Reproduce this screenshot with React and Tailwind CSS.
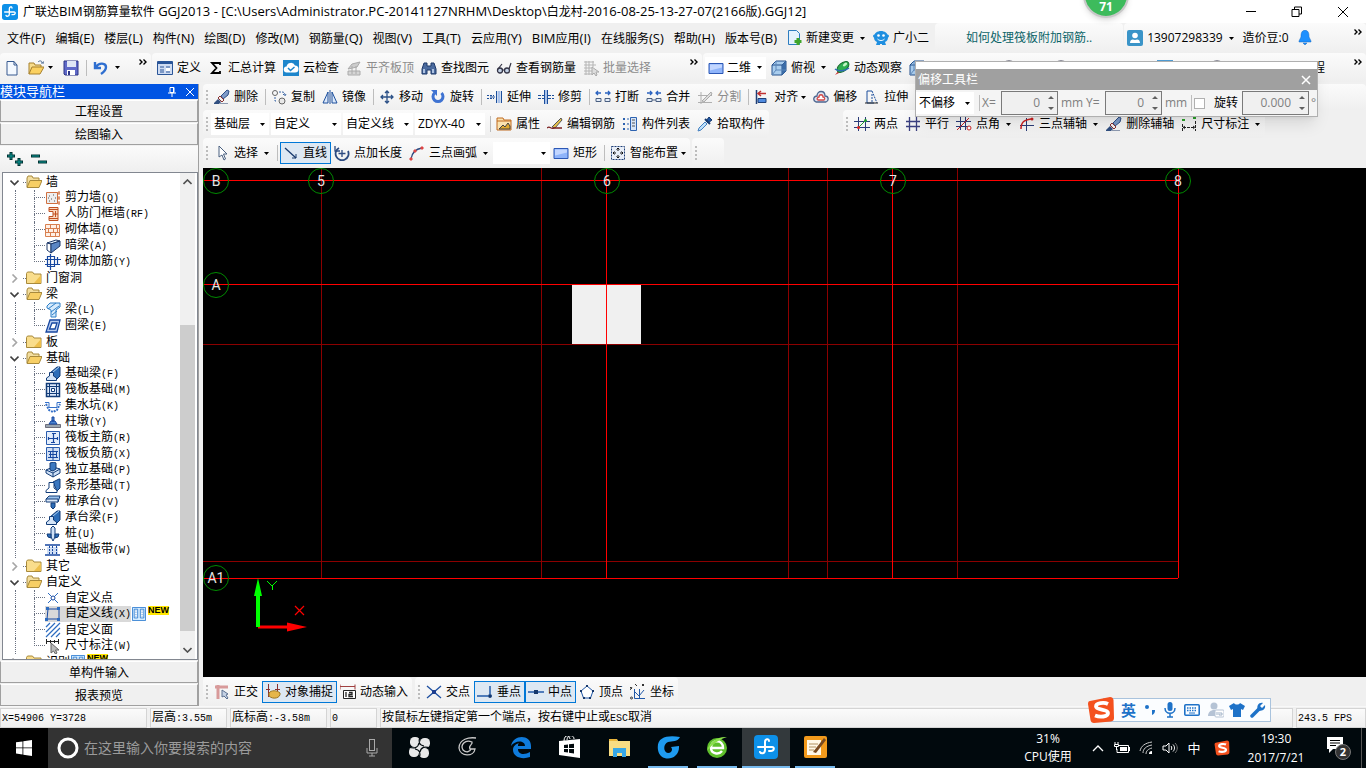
import React, { useState } from 'react';

const BLUE = '#1c4f9c';

// 16x16 drawings, keyed by name
const icons = {
  page: <><path d="M3 1.500h7l3 3.500V15H3z" fill="#f4f9ff" stroke="#36598f" /><path d="M10 1.500V5h3" fill="none" stroke="#36598f" /></>,
  open: <><path d="M1 14V3h5l1 2h6v3" fill="#f7dc8c" stroke="#a7812e" /><path d="M1 14l3-7h12l-4 7z" fill="#fbd161" stroke="#a7812e" /><path d="M10 2c2-2 4-1 4.500 1m-1.500 0h3v-2" fill="none" stroke="#4d6b91" /></>,
  save: <><path d="M1 1h14v14H2l-1-1z" fill="#5f69c8" stroke="#2d3585" /><path d="M4 1h9v6H4z" fill="#dfe6f5" /><path d="M4 10h8v5H4z" fill="#fff" /><path d="M5 11h2v4H5z" fill="#2d3585" /></>,
  undo: <path d="M2 2v6h6M3 7c3-5 10-4 10 0 0 3-2 5-5 7" fill="none" stroke="#2f6fd0" strokeWidth="2.400" />,
  define: <><path d="M.5 1.500h15v13H.5z" fill="#cfdcf2" stroke="#2a5598" /><path d="M1 2h14v2H1z" fill="#2a5598" /><path d="M3 7h4M3 10h4M3 12h4M9 7h4M9 12h4" stroke="#2a5598" /><path d="M9 8h4v3H9z" fill="#fff" /></>,
  sigma: <path d="M12 5V3H4l4.500 5L4 13h8v-2" fill="none" stroke="#000" strokeWidth="1.800" />,
  cloud: <><path d="M0 0h16v16H0z" fill="#1d86cc" /><path d="M4 12.500a3 3 0 0 1-.5-6 4.500 4.500 0 0 1 8.500-1 3.500 3.500 0 0 1 0 7z" fill="#fff" /><path d="M5 8l2.500 2.500L11.500 7" fill="none" stroke="#1d86cc" strokeWidth="1.500" /></>,
  flush: <><path d="M2 9l4-5 8-2-3 5z" fill="#ccc" stroke="#aaa" /><path d="M2 11h12v4H2zM6 6v8M10 6v8" fill="#d5d5d5" stroke="#aaa" /></>,
  binoc: <><path d="M3 3h3v3h4V3h3l2 6v5h-5v-4H6v4H1V9z" fill="#4a6a9e" stroke="#1d3869" /><path d="M3 9v4M12 9v4" stroke="#cfe0f8" strokeWidth="1.500" /></>,
  glasses: <><circle cx="4" cy="10.500" r="2.500" fill="#c5d4e8" stroke="#334" strokeWidth="1.300" /><circle cx="11" cy="10.500" r="2.500" fill="#c5d4e8" stroke="#334" strokeWidth="1.300" /><path d="M6 10h3M2 9l4-5M13 9l2-6" fill="none" stroke="#334" strokeWidth="1.200" /></>,
  batch: <><path d="M1 2h10M1 5h12M1 8h8M1 11h8M1 14h8M3 1v14M6 1v14M10 1v6" stroke="#b5b5b5" /><path d="M9 7v8l2-2 2 3 1-1-1-3h3z" fill="#ddd" stroke="#aaa" /></>,
  rect: <><path d="M1 3.500h14v10H1z" fill="#8fb4fa" stroke="#2b57b5" /><path d="M2 4.500h12v3l-12 3z" fill="#c2d6ff" /></>,
  cube: <><path d="M1 5l4-4h10v10l-4 4H1z" fill="#a9cdee" stroke="#24508c" /><path d="M1 5h10v10M11 5l4-4" fill="none" stroke="#24508c" /><path d="M11 5l4-4v10l-4 4z" fill="#3b6ca8" /><path d="M5 1v9h10M1 15l4-5" fill="none" stroke="#5d88ba" /></>,
  orbit: <><path d="M1 15l4-5 2 2z" fill="#c33" /><ellipse cx="9" cy="7" rx="7" ry="4" transform="rotate(-40 9 7)" fill="#2fae50" stroke="#17692b" /><ellipse cx="11" cy="4.500" rx="2.500" ry="1.400" transform="rotate(-40 11 4.500)" fill="#c4f5c4" /><path d="M1 9c4 3 10 2 14-1" fill="none" stroke="#2d6bb5" strokeWidth="1.500" /></>,
  brush: <><path d="M7 7l6-6 2 1-1 4-5 4z" fill="#7d9ac8" stroke="#2b4d85" /><path d="M6 7l4 4-2 2-4-4z" fill="#f4f4f4" stroke="#8a3030" /><path d="M0 14l4-4 3 3-2 2H0z" fill="#304f80" /><path d="M6 14.500h8" stroke="#8d9ab0" /></>,
  copy: <><circle cx="4" cy="4" r="2.500" fill="none" stroke="#666" /><circle cx="11" cy="12" r="3" fill="#e8e8e8" stroke="#666" /><path d="M8 3h3c2 0 3 1 3 4m-2-2l2 2 1-2M4 8v4h2" fill="none" stroke="#3b66a5" strokeDasharray="2 1" /></>,
  mirror: <><path d="M6 3v11H1zM10 3v11h5z" fill="#dbe8fa" stroke={BLUE} /><path d="M8 1v14" stroke={BLUE} /></>,
  move: <path d="M8 2v12M2 8h12M6 4l2-2 2 2M6 12l2 2 2-2M4 6L2 8l2 2M12 6l2 2-2 2" fill="none" stroke="#2c5187" strokeWidth="1.300" />,
  rotate: <><path d="M4.500 4a5 5 0 1 0 7 0" fill="none" stroke="#3f73d2" strokeWidth="3" /><path d="M1 1h6v6z" fill="#3f73d2" /></>,
  extend: <><path d="M0 6.500h7M0 9.500h7" stroke={BLUE} strokeDasharray="2 1" /><path d="M9.500 2v12M14.500 2v12" stroke={BLUE} /><path d="M12 2v12" stroke="#a9c2ea" strokeWidth="3" /><path d="M3 8h5" stroke={BLUE} /></>,
  trim: <><path d="M0 6.500h6M0 9.500h6M10 6.500h6M10 9.500h6" stroke={BLUE} strokeDasharray="3 1" /><path d="M6.500 1v14M9.500 1v14" stroke={BLUE} /><path d="M8 1v14" stroke="#a9c2ea" strokeWidth="2" /></>,
  split: <><path d="M1 9.500h5v3H1zM10 9.500h5v3h-5z" fill="#e3ecf8" stroke="#4a5f80" /><path d="M6 4H1m2-2L1 4l2 2M10 4h5m-2-2l2 2-2 2" fill="none" stroke="#2b63c0" strokeWidth="1.300" /></>,
  merge: <><path d="M1 9.500h5v3H1zM10 9.500h5v3h-5zM6 11h4" fill="#e3ecf8" stroke="#4a5f80" /><path d="M1 4h5m-2-2l2 2-2 2M15 4h-5m2-2l-2 2 2 2" fill="none" stroke="#2b63c0" strokeWidth="1.300" /></>,
  cut: <><path d="M1 6.500h14M1 13.500h14M4 3v12" stroke="#b0b0b0" /><path d="M5 12l9-9 1 2-8 8z" fill="#ddd" stroke="#aaa" /></>,
  align: <><path d="M2.500 1v14" stroke="#1f3f77" strokeWidth="1.500" /><path d="M4 4.500h8M7 2L4 4.500 7 7" fill="none" stroke="#c03030" strokeWidth="1.500" /><path d="M4 9.500h8v4H4z" fill="#4f8be0" stroke="#1f3f77" /></>,
  offset: <><path d="M3 13c-4-2-2-6 1-6 0-6 8-6 8 0 4 0 4 5 1 6z" fill="#dfe7f2" stroke="#4d6690" strokeWidth="1.300" /><path d="M5 11c-2-1 0-3 1-3 0-3 4-3 4 0 2 0 2 2 1 3z" fill="#fff" stroke="#d24a4a" strokeWidth="1.300" /></>,
  stretch: <><path d="M8 2H3v12h7" fill="none" stroke={BLUE} /><path d="M8 2l5 12M8 5v9" fill="none" stroke={BLUE} strokeDasharray="2 1" /><path d="M1 14h13" stroke="#222" /></>,
  props: <><path d="M1 2h6l1 2h7v10H1z" fill="#fbe3b0" stroke="#c06a20" /><path d="M1 5h14" stroke="#c06a20" /><path d="M3 13l4-4 2 2 3-4 2 3v3z" fill="#e0aa30" stroke="#444" /></>,
  pen: <><path d="M5 11L14 2l1 2L8 12z" fill="#e6c14a" stroke="#555" /><path d="M0 12c3-3 4 2 7 0h8" fill="none" stroke="#7b2020" strokeWidth="1.300" /></>,
  list: <><path d="M1 2h2v2H1zM1 7h2v2H1zM1 12h2v2H1z" fill="#2d62b0" /><path d="M5 3h2M5 8h2M5 13h2" stroke="#2d62b0" /><path d="M8.500 1.500h6v13h-6z" fill="#d6e4f7" stroke="#2d62b0" /><path d="M10 4h3M10 7h3M10 10h3" stroke="#555" /></>,
  picker: <><path d="M9 5l3-4 3 3-4 3z" fill="#1f57a5" stroke="#16386c" /><path d="M8 3l5 5" stroke="#16386c" strokeWidth="2" /><path d="M8 6l-6 6-1 3 3-1 6-6z" fill="#bfe0fa" stroke="#4480c0" /></>,
  twoPt: <><path d="M4.500 1v14M11.500 1v14M0 5.500h16M0 11.500h16" stroke="#2a3c78" /><path d="M4 12l8-8" stroke="#20a030" /><circle cx="4.500" cy="11.500" r="1.500" fill="#d22" /><circle cx="11.500" cy="4.500" r="1.500" fill="#20a030" /></>,
  parallel: <path d="M4.500 1v14M11.500 1v14M1 5.500h14M1 10.500h14" stroke="#3a3f80" strokeWidth="1.300" />,
  angle: <><path d="M4.500 1v13M9.500 1v13M0 5.500h15M0 10.500h13" stroke="#2a3c78" /><path d="M1 14L13 2" stroke="#c22" /><circle cx="13" cy="12" r="2" fill="#fff" stroke="#c22" /></>,
  arcAxis: <><path d="M7.500 2v13M1 9.500h14" stroke="#2a3c78" /><path d="M2 13c0-7 3-9 10-10" fill="none" stroke="#c22" strokeWidth="1.500" /><circle cx="13" cy="3" r="1.500" fill="#c22" /></>,
  dims: <><path d="M1 3h3v2H1zM12 1h3v2h-3z" fill="#28a228" /><path d="M1.500 8v7M14.500 5v10M2 11.500h12M4 10l-2 1.500L4 13M12 10l2 1.500-2 1.500" fill="none" stroke="#222" strokeDasharray="3 1" /></>,
  pointer: <path d="M5 1v11l3-2 2 5 1.500-1L9.500 9H13z" fill="#fff" stroke="#4a6080" />,
  line: <><path d="M2 3l11 10" stroke="#16386c" strokeWidth="1.300" /><path d="M9 13h4V9" fill="none" stroke="#16386c" /></>,
  ptLen: <><path d="M5 3a6.500 6.500 0 1 0 9 3" fill="none" stroke="#2c4a80" strokeWidth="1.800" /><path d="M8 5v7M4.500 8.500h7M1 1v5h5" fill="none" stroke="#2c4a80" strokeWidth="1.300" /></>,
  arc: <><path d="M2 14c1-7 5-10 11-11" fill="none" stroke="#2c4a80" strokeWidth="1.300" /><path d="M1 13h2v2H1zM5 5h2v2H5zM12 2h2v2h-2z" fill="#d44" stroke="#d44" /></>,
  smart: <><path d="M1.500 1.500h13v13h-13z" fill="#e8eef8" stroke="#1f3f77" strokeDasharray="2 1" /><path d="M8 3v3M8 10v3M3 8h3M10 8h3M6.500 4.500L8 3l1.500 1.500M6.500 11.500L8 13l1.500-1.500M4.500 6.500L3 8l1.500 1.500M11.500 6.500L13 8l-1.500 1.500" fill="none" stroke="#111" /></>,
  ortho: <><path d="M1 3h13M4 1v14" stroke="#d89a9a" strokeWidth="3" /><path d="M8 6v7l2-1 3 3 1-1-2-3 2-1z" fill="#c5d2e5" stroke="#5c7090" /></>,
  snap: <><path d="M3.500 0v13M12.500 0v10M1 5.500h4M10 5.500h5" stroke="#8a3030" /><path d="M4 9c2-3 8-3 11 0 1 5-7 7-11 3z" fill="#e5b64a" stroke="#9b7624" /></>,
  dynIn: <><path d="M0 2.500h15M0 .5v5M15 .5v5" stroke="#a04040" /><path d="M3.500 6.500h12v8h-12z" fill="#fff" stroke="#222" /><path d="M6 8v5M9 8.500h3v2H9v2h4" fill="none" stroke="#222" strokeWidth="1.300" /></>,
  cross: <><path d="M1 2l14 12M15 2L1 14" stroke="#1d4fa0" strokeWidth="1.300" /><path d="M6 6h4v4H6z" fill="#1d3f90" /></>,
  perp: <><path d="M0 12h15M13 2v12" stroke="#2058a8" strokeWidth="1.500" /><path d="M11.500 10.500h3v3h-3z" fill="#16386c" /></>,
  mid: <><path d="M0 8h16" stroke="#2058a8" strokeWidth="1.500" /><path d="M6 6h4v4H6z" fill="#16386c" /></>,
  vertex: <><path d="M8 2l6 5-2.500 7h-7L2 7z" fill="#fff" stroke="#2058a8" /><path d="M7 1h2v2H7zM1 6h2v2H1zM13 6h2v2h-2zM4 13h2v2H4zM10 13h2v2h-2z" fill="#16386c" /></>,
  coord: <><path d="M4.500 5v9.500H15M4 7l5 5 5-6M9.500 5v9" fill="none" stroke="#2058a8" /><path d="M0 3l2 2M2 3L0 6M5 0l2 2M14 0l-2 2M12 0l2 2" stroke="#333" /><circle cx="1.500" cy="14" r="1" fill="none" stroke="#333" /></>,
  newDoc: <><path d="M2.500.5h8l3 3v11h-11z" fill="#e4f2fd" stroke="#2d7dc0" /><path d="M12 8v7M8.500 11.500h7" stroke="#3fa52a" strokeWidth="3" /></>,
  mascot: <><path d="M1 7c0-8 14-8 14 0 0 3-1 4-3 5l1 3H9v-1H7v1H3l1-3C2 11 1 10 1 7z" fill="#1f8fe0" /><circle cx="1.500" cy="6" r="1.500" fill="#1f8fe0" /><circle cx="14.500" cy="6" r="1.500" fill="#1f8fe0" /><circle cx="5.500" cy="5.500" r="1.300" fill="#fff" /><circle cx="10.500" cy="5.500" r="1.300" fill="#fff" /><path d="M4.500 9c2 2 5 2 7 0" fill="none" stroke="#fff" /></>,
  user: <><rect width="16" height="16" rx="2" fill="#3a94c8" /><circle cx="8" cy="5.500" r="2.800" fill="#fff" /><path d="M3 13c0-4 3-4 5-3 2-1 5-1 5 3z" fill="#fff" /></>,
  bell: <path d="M8 0c4 1 4 4 4 7l2 4v1H2v-1l2-4c0-3 0-6 4-7zM6 13h4l-2 2z" fill="#1e90ff" stroke="#1668c0" strokeWidth=".5" />,
  gauge: <><circle cx="8" cy="8" r="7" fill="#eee" stroke="#667" strokeWidth="1.500" /><path d="M8 4v4h3" fill="none" stroke="#667" /></>,
  noView: <><path d="M0 0h16v16H0z" fill="#4f9bd2" /><circle cx="8" cy="8" r="6" fill="#fff" stroke="#d22" strokeWidth="2" /></>,

  // component tree
  folder: <><path d="M.5 13.500V3.500l1-1.500h5l1.500 2h7v9.500z" fill="#f9dd8c" stroke="#a88a3c" /><path d="M8 13l7-8v8z" fill="#edbf4c" /></>,
  folderOpen: <><path d="M1 13V4l1-2h4l1 2h6v3" fill="#f3dea0" stroke="#a88a3c" /><path d="M1 13.500l3-7h12l-3 7z" fill="#f7cf66" stroke="#a88a3c" /></>,
  shear: <><path d="M1.500 2.500h11v11h-11z" fill="#eee" stroke="#d07040" /><path d="M4 6h1M8 5h1M6 9h1M10 8h1M4 11h1M9 11h1M3 8h1" stroke="#555" /><path d="M14 1v4M14 6v4M14 11v4M12 3h3M12 8h3M12 13h3" stroke="#d07040" /></>,
  airWall: <><path d="M4 1.500h9v13H4v-4h4v-5H4z" fill="#fbd9c0" stroke="#c05020" /><path d="M4 3.500h9M8 8h5M4 12.500h9M10.500 5v6" stroke="#c05020" /></>,
  brick: <><path d="M.5 2.500h14v12H.5z" fill="#fff0e6" stroke="#d88050" /><path d="M1 6.500h14M1 10.500h14M5.500 2v4M11.500 2v4M3.500 6v4M8.500 6v4M12.500 6v4M5.500 10v4M10.500 10v4" stroke="#d88050" /></>,
  hidden: <><path d="M2 5l9-3 4 1-9 3z" fill="#dcebfa" stroke="#1d3869" /><path d="M2 5l4 1v9l-4-3z" fill="#fff" stroke="#1d3869" /><path d="M6 6l9-3v5l-9 7z" fill="#5a86c5" stroke="#1d3869" /></>,
  wallBar: <path d="M2.500 2.500h7v10h-7zM5.500 0v16M0 5.500h16M0 10.500h9M10 10.500h5M12.500 3v8" fill="none" stroke="#1747a0" strokeWidth="1.200" />,
  beam: <><path d="M2 4l3-3h10v4l-4 3v7H6V8L2 6z" fill="#d7ebfc" stroke="#2d7fc8" /><path d="M3 7l8-6M6 10l8-6M7 13l5-4" stroke="#2d7fc8" /></>,
  ring: <path d="M5 2h10l-3 12H1z M7 5h5l-2 6H4.500z" fill="#b8cdf0" fillRule="evenodd" stroke="#1747a0" strokeWidth="1.300" />,
  fdnBeam: <><path d="M5 7l7-6h3v9l-4 4z" fill="#2c6db8" stroke="#123c78" /><path d="M1.500 14.500V12l3-2V6.500h4V10l3 2v2.500z" fill="#d5e5f8" stroke="#123c78" /><path d="M8 6l6-5" stroke="#a9cdf0" /></>,
  raft: <><path d="M1.500 1.500h13v13h-13z" fill="#dce8fa" stroke="#123c78" strokeWidth="1.500" /><path d="M4.500 1v14M11.500 1v14M1 4.500h14M1 11.500h14" stroke="#123c78" /><path d="M6.500 6.500h3v3h-3z" fill="#fff" stroke="#123c78" /></>,
  pit: <><path d="M0 4.500h4v5h8v-5h4" fill="none" stroke="#3570c8" /><path d="M1 6l3 6 4 2 4-2 3-6" fill="none" stroke="#3570c8" strokeDasharray="2 1" strokeWidth="2" /></>,
  pier: <><path d="M.5 10.500h15v3H.5z" fill="#9aa5b0" stroke="#445" strokeWidth=".7" /><path d="M4 10l2-3h4l2 3zM7 3h2v4H7z" fill="#4d85d0" stroke="#1747a0" /></>,
  mainBar: <><path d="M1.500 1.500h13v13h-13z" fill="#e4eefc" stroke="#2a5dae" /><path d="M8.500 3v10M3 8.500h10M3.500 7v3M12.500 7v3M7 3.500h4M6 12.500h4" stroke="#1747a0" strokeWidth="1.200" /></>,
  negBar: <><path d="M1.500 1.500h13v13h-13z" fill="#cfdef4" stroke="#2a5dae" /><path d="M3 5.500h10M3 11.500h10M8 2v12M5.500 5v3M11.500 5v3M5.500 11V8M11.500 11V8M4 8.500h8" stroke="#1747a0" /></>,
  isolated: <><path d="M1 8l7-3 7 2v4l-7 4-7-4z" fill="#cfe1f7" stroke="#123c78" /><path d="M1 8l7 3 7-4M8 11v4" fill="none" stroke="#123c78" /><path d="M5 1l4-1 2 1v6L8 9 5 8z" fill="#3c78c0" stroke="#123c78" /></>,
  strip: <><path d="M8 4l6-3h1v9l-3 3z" fill="#3c78c0" stroke="#123c78" /><path d="M1 14.500v-2l3-2.500V4.500h5V10l3 2.500v2z" fill="#fff" stroke="#123c78" /></>,
  cap: <><path d="M1 5l3-3h11l-2 6z" fill="#9bc2ec" stroke="#123c78" /><path d="M1 5h12v3H1z" fill="#dceafa" stroke="#123c78" /><path d="M6 9h4v4l-2 2-2-2z" fill="#2c6db8" stroke="#123c78" /></>,
  pile: <><path d="M6 2l2-2 2 2v9l-2 4-2-4z" fill="#cfe1f7" stroke="#123c78" /><path d="M2 8h4v4L3 11zM10 8h4l-1 3-3 1z" fill="#2c6db8" stroke="#123c78" /></>,
  band: <><path d="M0 3h15M0 13h15" stroke="#1747a0" strokeWidth="1.500" /><path d="M2 5h11v7H2z" fill="#cfdef4" /><path d="M4.500 4v9M7.500 4v9M11.500 4v9" stroke="#1747a0" strokeDasharray="2 1" /></>,
  customPt: <><path d="M3 3l10 10M13 3L3 13" stroke="#2d6cc0" /><circle cx="8" cy="8" r="2" fill="#fff" stroke="#1747a0" /></>,
  customLn: <><path d="M3 3h11v10H2z" fill="none" stroke="#1747a0" /><path d="M1 1h3v3H1zM12 1h3v3h-3zM0 12h3v3H0zM12 12h3v3h-3z" fill="#2d6cc0" /></>,
  customArea: <path d="M1 5l4-4M1 10l9-9M1 15L15 1M6 15l9-9M11 15l4-4" stroke="#2d6cc0" strokeWidth="1.200" />,
  dimNote: <><path d="M1.500 1v5M13.500 1v5M1 3.500h12M5.500 2v3M9.500 2v3" stroke="#222" /><path d="M6 5v10l2.500-2 2 3 1.500-1-1.500-3H14z" fill="#bbb" stroke="#666" /></>,
  columns: <><path d="M.5.500h15v15H.5z" fill="#d5ecff" stroke="#2a7ad0" /><path d="M2.500 2.500h4v10h-4zM9.500 2.500h4v10h-4z" fill="#fff" stroke="#2a7ad0" /><path d="M4.500 4v7M11.500 4v7" stroke="#2a7ad0" strokeDasharray="1 1" /></>,
};

const Icon = ({ name, className = 'size-4' }) => (
  <svg viewBox="0 0 16 16" className={`shrink-0 ${className}`} aria-hidden="true">
    {icons[name]}
  </svg>
);

const Caret = ({ className = '' }) => (
  <svg viewBox="0 0 5 3" className={`h-[3px] w-[5px] shrink-0 ${className}`} aria-hidden="true">
    <path d="M0 0h5L2.500 3z" fill="currentColor" />
  </svg>
);

const Chevrons = ({ className = '' }) => (
  <svg viewBox="0 0 8 6" className={`h-[6px] w-2 shrink-0 self-start ${className}`} aria-hidden="true">
    <path d="M.5.500L3 3 .5 5.500M4.500.500L7 3 4.500 5.500" fill="none" stroke="#000" strokeWidth="1.400" />
  </svg>
);

const Tool = ({ icon, label, drop, tightDrop, active, disabled }) => (
  <button
    type="button"
    disabled={disabled}
    className={`flex h-[22px] shrink-0 items-center whitespace-nowrap pr-1 pl-[3px] ${
      active ? 'bg-[#dde8f3] ring-1 ring-[#0078d7] ring-inset' : ''
    } ${disabled ? 'text-[#8c8c8c]' : ''}`}
  >
    <Icon name={icon} />
    <span className="ml-1">{label}</span>
    {drop && <Caret className="mr-px ml-[6px]" />}
    {tightDrop && <Caret className="ml-[3px]" />}
  </button>
);

const Combo = ({ label, value, icon, className }) => (
  <label className={`relative flex h-[22px] shrink-0 items-center bg-white ${className}`}>
    {icon && <Icon name={icon} className="ml-[3px] size-4" />}
    <select aria-label={label} className="h-full min-w-0 flex-1 appearance-none pr-3 pl-[3px] outline-none">
      <option>{value}</option>
    </select>
    <Caret className="pointer-events-none absolute right-1" />
  </label>
);

const Sep = () => (
  <span className="flex w-[6px] shrink-0 justify-center">
    <span className="h-4 w-px bg-[#bdbdbd]" />
  </span>
);

const Grip = () => (
  <span className="flex w-2 shrink-0 flex-col items-center gap-[2px]">
    {[0, 1, 2, 3].map((i) => (
      <span key={i} className="size-[2px] bg-[#bcbcbc]" />
    ))}
  </span>
);

const Strip = ({ className = '', children }) => (
  <div className={`flex h-full items-center rounded-sm bg-linear-to-b from-[#fbfbfb] to-[#efefef] ${className}`}>
    {children}
  </div>
);

// Sets the latin runs of a mixed text in a size of their own
const Mixed = ({ text, latin }) =>
  text.split(/([\x20-\x7e]+)/).map((part, i) =>
    i % 2 ? <span key={i} className={latin}>{part}</span> : part
  );

// SimSun-like text: latin glyphs are half the width of a Chinese one
const Song = ({ children }) => (
  <span className="font-['Liberation_Mono','Noto_Sans_CJK_SC',monospace] whitespace-pre">
    <Mixed text={children} latin="text-[10px]" />
  </span>
);

const menus = [
  '文件(F)', '编辑(E)', '楼层(L)', '构件(N)', '绘图(D)', '修改(M)', '钢筋量(Q)', '视图(V)',
  '工具(T)', '云应用(Y)', 'BIM应用(I)', '在线服务(S)', '帮助(H)', '版本号(B)',
];

const tree = [
  { name: '墙', open: true, items: [
    ['shear', '剪力墙(Q)'], ['airWall', '人防门框墙(RF)'], ['brick', '砌体墙(Q)'], ['hidden', '暗梁(A)'], ['wallBar', '砌体加筋(Y)'],
  ] },
  { name: '门窗洞' },
  { name: '梁', open: true, items: [['beam', '梁(L)'], ['ring', '圈梁(E)']] },
  { name: '板' },
  { name: '基础', open: true, items: [
    ['fdnBeam', '基础梁(F)'], ['raft', '筏板基础(M)'], ['pit', '集水坑(K)'], ['pier', '柱墩(Y)'],
    ['mainBar', '筏板主筋(R)'], ['negBar', '筏板负筋(X)'], ['isolated', '独立基础(P)'], ['strip', '条形基础(T)'],
    ['cap', '桩承台(V)'], ['fdnBeam', '承台梁(F)'], ['pile', '桩(U)'], ['band', '基础板带(W)'],
  ] },
  { name: '其它' },
  { name: '自定义', open: true, items: [
    ['customPt', '自定义点'], ['customLn', '自定义线(X)'], ['customArea', '自定义面'], ['dimNote', '尺寸标注(W)'],
  ] },
  { name: '识别', isNew: true },
];

const NewTag = () => (
  <>
    <Icon name="columns" className="ml-px size-[14px]" />
    <span className="ml-0.5 self-start bg-[#ffe600] text-[9px] leading-[9px] font-bold">NEW</span>
  </>
);

const TitleBar = () => (
  <header className="flex h-[23px] shrink-0 items-center bg-white pl-[2px]">
    <Logo className="size-4" />
    <h1 className="ml-[5px] whitespace-nowrap">
      <Mixed
        text="广联达BIM钢筋算量软件 GGJ2013 - [C:\Users\Administrator.PC-20141127NRHM\Desktop\白龙村-2016-08-25-13-27-07(2166版).GGJ12]"
        latin="text-[13px]"
      />
    </h1>
    <div className="ml-auto flex">
      {[['最小化', 'M1 5.500h10'], ['还原', 'M1 3.500h7v7H1zM3.500 3V1h7v7H8'], ['关闭', 'M1 1l10 10M11 1L1 11']].map(([name, d]) => (
        <button key={name} type="button" aria-label={name} className="flex w-[46px] justify-center">
          <svg viewBox="0 0 12 12" className="size-3"><path d={d} fill="none" stroke="#000" /></svg>
        </button>
      ))}
    </div>
  </header>
);

const Logo = ({ className }) => (
  <svg viewBox="0 0 24 24" className={className} aria-hidden="true">
    <rect width="24" height="24" rx="4" fill="#0d90e8" />
    <path d="M15 6c0-3-4-2-4 1v8c0 4-4 4-5 2M4 12h14c3 0 2 4-1 4h-2" fill="none" stroke="#fff" strokeWidth="2" strokeLinecap="round" />
  </svg>
);

const MenuBar = () => (
  <nav className="flex h-[30px] shrink-0 items-center pl-[7px]">
    <div className="flex gap-[10px]">
      {menus.map((m) => (
        <button key={m} type="button" className="whitespace-nowrap">
          <Mixed text={m} latin="text-[13px]" />
        </button>
      ))}
    </div>
    <div className="ml-[6px] flex">
      <Tool icon="newDoc" label="新建变更" drop />
      <Tool icon="mascot" label="广小二" />
    </div>
    <Strip className="ml-[2px] w-[188px] justify-center">
      <a href="#tip" className="text-[#0b6468]">如何处理筏板附加钢筋..</a>
    </Strip>
    <Strip className="ml-px flex-1">
      <Tool icon="user" label="13907298339" drop />
      <span className="ml-1">造价豆:0</span>
      <Icon name="bell" className="ml-2 size-4" />
      <Chevrons className="mt-[6px] mr-1 ml-auto" />
    </Strip>
  </nav>
);

const MainToolbar = () => (
  <div className="flex h-[31px] shrink-0 items-center gap-px pb-[2px]">
    <Strip className="w-[151px] pl-1">
      <button type="button" aria-label="新建"><Icon name="page" /></button>
      <button type="button" aria-label="打开" className="ml-2 flex items-center gap-1">
        <Icon name="open" /><Caret />
      </button>
      <button type="button" aria-label="保存" className="mr-1 ml-[10px]"><Icon name="save" /></button>
      <Sep />
      <button type="button" aria-label="撤销" className="ml-1 flex items-center gap-[6px]">
        <Icon name="undo" /><Caret />
      </button>
      <Chevrons className="mt-[6px] mr-1 ml-auto" />
    </Strip>
    <Strip className="w-[550px] pl-0.5">
      <Tool icon="define" label="定义" />
      <Tool icon="sigma" label="汇总计算" />
      <Tool icon="cloud" label="云检查" />
      <Tool icon="flush" label="平齐板顶" disabled />
      <Tool icon="binoc" label="查找图元" />
      <Tool icon="glasses" label="查看钢筋量" />
      <Tool icon="batch" label="批量选择" disabled />
      <Chevrons className="mt-[6px] mr-1 ml-auto" />
    </Strip>
    <Strip className="min-w-0 flex-1 pl-0.5">
      <Combo label="视图" value="二维" icon="rect" className="mr-0.5 w-[61px]" />
      <Tool icon="cube" label="俯视" drop />
      <Tool icon="orbit" label="动态观察" />
      <div className="ml-[3px] flex items-center gap-9">
        <Icon name="cube" />
        <span className="w-1" />
        <Icon name="gauge" />
        <Icon name="gauge" />
        <Icon name="move" />
        <Icon name="noView" />
        <Icon name="gauge" />
      </div>
      <span className="mr-[29px] ml-auto">程</span>
      <Chevrons className="mt-[6px] mr-1" />
    </Strip>
  </div>
);

const TreeGroup = ({ group, selected, onSelect }) => (
  <li>
    <div className="flex h-4 items-center">
      <svg viewBox="0 0 9 9" className="ml-[7px] size-[9px]" aria-hidden="true">
        <path d={group.open ? 'M.5 2.500l4 4 4-4' : 'M2.500.500l4 4-4 4'} fill="none" stroke={group.open ? '#404040' : '#a6a6a6'} strokeWidth="1.600" />
      </svg>
      <span className="ml-1 w-[3px] border-t border-dotted border-gray-500" />
      <Icon name={group.open ? 'folderOpen' : 'folder'} />
      <span className="ml-1">{group.name}</span>
      {group.isNew && <NewTag />}
    </div>
    {group.items && (
      <ul>
        {group.items.map(([icon, label], i) => (
          <li key={label} className="flex h-4 items-center">
            <span className="ml-3 w-[19px] self-stretch border-l border-dotted border-gray-500" />
            <span className="flex w-[11px] flex-col self-stretch">
              <span className="h-1/2 border-b border-l border-dotted border-gray-500" />
              {i < group.items.length - 1 && <span className="h-1/2 border-l border-dotted border-gray-500" />}
            </span>
            <button
              type="button"
              onClick={() => onSelect(label)}
              className={`flex h-4 items-center ${selected === label ? 'bg-[#d9d9d9]' : ''}`}
            >
              <Icon name={icon} />
              <span className="ml-1"><Song>{label}</Song></span>
            </button>
            {label === '自定义线(X)' && <NewTag />}
          </li>
        ))}
      </ul>
    )}
  </li>
);

const SideButton = ({ children }) => (
  <button type="button" className="h-[22px] shrink-0 border border-[#a0a0a0] border-t-white bg-[#f0f0f0] pt-0.5">
    {children}
  </button>
);

const Sidebar = () => {
  const [selected, setSelected] = useState('自定义线(X)');

  return (
    <aside className="flex w-[199px] shrink-0 flex-col gap-px border-r border-[#a0a0a0] font-['Liberation_Sans','Noto_Sans_CJK_SC',sans-serif]">
      <div className="flex h-[15px] shrink-0 items-center bg-[#0054e3] pr-1 text-white">
        <h2 className="text-[13px] leading-4">模块导航栏</h2>
        <svg viewBox="0 0 8 10" className="ml-auto h-[10px] w-2"><path d="M2 .5h4v5H2zM0 6h8M4 6v4M5.500 1v4" fill="none" stroke="#fff" /></svg>
        <svg viewBox="0 0 8 8" className="ml-[10px] size-2"><path d="M0 0l8 8M8 0L0 8" stroke="#fff" /></svg>
      </div>
      <SideButton>工程设置</SideButton>
      <SideButton>绘图输入</SideButton>
      <div className="flex h-[25px] shrink-0 items-center gap-2 bg-linear-to-b from-[#fbfbfb] to-[#efefef] pl-[7px]">
        <button type="button" aria-label="全部展开">
          <svg viewBox="0 0 16 14" className="h-[14px] w-4"><path d="M4 0v8M0 4h8M12 6v8M8 10h8" stroke="#033" strokeWidth="3" /><path d="M4 1v6M1 4h6M12 7v6M9 10h6" stroke="#0a9a96" /></svg>
        </button>
        <button type="button" aria-label="全部折叠">
          <svg viewBox="0 0 16 14" className="h-[14px] w-4"><path d="M0 4h9M7 10h9" stroke="#033" strokeWidth="3" /><path d="M1 4h7M8 10h7" stroke="#0a9a96" /></svg>
        </button>
      </div>
      <div className="ml-[2px] flex min-h-0 flex-1 basis-0 overflow-hidden border border-[#828790] bg-white pr-[2px]">
        <ul className="min-w-0 flex-1 whitespace-nowrap pt-px">
          {tree.map((g) => (
            <TreeGroup key={g.name} group={g} selected={selected} onSelect={setSelected} />
          ))}
        </ul>
        <div className="flex w-[15px] shrink-0 flex-col items-center bg-[#f0f0f0]">
          <svg viewBox="0 0 9 6" className="my-[6px] h-[6px] w-[9px]"><path d="M.5 5l4-4 4 4" fill="none" stroke="#505050" strokeWidth="1.600" /></svg>
          <span className="grow-[134]" />
          <span className="w-full grow-[307] bg-[#cdcdcd]" />
          <span className="grow-[10]" />
          <svg viewBox="0 0 9 6" className="my-[6px] h-[6px] w-[9px]"><path d="M.5 1l4 4 4-4" fill="none" stroke="#505050" strokeWidth="1.600" /></svg>
        </div>
      </div>
      <SideButton>单构件输入</SideButton>
      <SideButton>报表预览</SideButton>
    </aside>
  );
};

const axes = [
  ['B', 13, 13], ['5', 118, 13], ['6', 404, 13], ['7', 690, 13], ['8', 975, 13], ['A', 13, 117], ['A1', 13, 410],
];

const Drawing = () => (
  <svg className="block min-h-0 w-full flex-1 bg-black" role="img" aria-label="轴网">
    <g stroke="#8b0000" strokeWidth="1" shapeRendering="crispEdges">
      {[118, 338, 585, 624, 754].map((x) => (
        <line key={x} x1={x + 0.5} x2={x + 0.5} y1="0" y2="410" />
      ))}
      <line x1="0" x2="975" y1="176.500" y2="176.500" />
      <line x1="0" x2="975" y1="393.500" y2="393.500" />
    </g>
    <rect x="369" y="117" width="69" height="59" fill="#f0f0f0" />
    <g stroke="#ff0000" strokeWidth="1" shapeRendering="crispEdges">
      {[403, 689, 975].map((x) => (
        <line key={x} x1={x + 0.5} x2={x + 0.5} y1="0" y2="410" />
      ))}
      {[12, 116, 410].map((y) => (
        <line key={y} x1="0" x2="975" y1={y + 0.5} y2={y + 0.5} />
      ))}
    </g>
    {axes.map(([name, x, y]) => (
      <g key={name}>
        <circle cx={x} cy={y} r="12.500" fill="none" stroke="#008a00" />
        <text x={x} y={y + 5} textAnchor="middle" fill="#e4e4e4" fontSize="14" fontFamily="Roboto, sans-serif">{name}</text>
      </g>
    ))}
    <path d="M55 457.500h29v-3l20 4.500-20 4.500v-3H55z" fill="#ff0000" />
    <path d="M53 459v-31h-2l4-18 4 18h-2v31z" fill="#00ff00" />
    <path d="M64 413l5 5 5-5M69.500 418v4" fill="none" stroke="#00ff00" shapeRendering="crispEdges" />
    <path d="M92 438l9 9M101 438l-9 9" fill="none" stroke="#ff0000" strokeWidth="1.200" />
  </svg>
);

const Workspace = () => (
  <main className="flex min-w-0 flex-1 flex-col">
    <div className="flex h-[26px] shrink-0 items-center">
      <Strip className="flex-1">
        <Grip />
        <Tool icon="brush" label="删除" />
        <Sep />
        <Tool icon="copy" label="复制" />
        <Tool icon="mirror" label="镜像" />
        <Sep />
        <Tool icon="move" label="移动" />
        <Tool icon="rotate" label="旋转" />
        <Sep />
        <Tool icon="extend" label="延伸" />
        <Tool icon="trim" label="修剪" />
        <Sep />
        <Tool icon="split" label="打断" />
        <Tool icon="merge" label="合并" />
        <Tool icon="cut" label="分割" disabled />
        <Sep />
        <Tool icon="align" label="对齐" tightDrop />
        <Tool icon="offset" label="偏移" />
        <Tool icon="stretch" label="拉伸" />
      </Strip>
    </div>
    <div className="flex h-7 shrink-0 items-center">
      <Strip>
        <Grip />
        <div className="mr-[2px] flex gap-0.5">
          <Combo label="楼层" value="基础层" className="w-[58px]" />
          <Combo label="构件类型" value="自定义" className="w-[70px]" />
          <Combo label="构件种类" value="自定义线" className="w-[70px]" />
          <Combo label="构件" value="ZDYX-40" className="w-[70px]" />
        </div>
        <Sep />
        <Tool icon="props" label="属性" />
        <Tool icon="pen" label="编辑钢筋" />
        <Tool icon="list" label="构件列表" />
        <Tool icon="picker" label="拾取构件" />
      </Strip>
      <Strip className="ml-[74px]">
        <Grip />
        <Tool icon="twoPt" label="两点" />
        <Tool icon="parallel" label="平行" />
        <Tool icon="angle" label="点角" drop />
        <Tool icon="arcAxis" label="三点辅轴" drop />
        <Tool icon="brush" label="删除辅轴" />
        <Tool icon="dims" label="尺寸标注" drop />
      </Strip>
    </div>
    <div className="flex h-[30px] shrink-0 items-center gap-0.5">
      <Strip>
        <Grip />
        <Tool icon="pointer" label="选择" drop />
        <Sep />
        <Tool icon="line" label="直线" active />
        <Tool icon="ptLen" label="点加长度" />
        <Tool icon="arc" label="三点画弧" drop />
        <Combo label="画弧方式" value="" className="w-[57px]" />
        <Tool icon="rect" label="矩形" />
        <Sep />
        <Tool icon="smart" label="智能布置" tightDrop />
      </Strip>
      <Strip className="w-8">
        <Grip />
      </Strip>
    </div>
    <Drawing />
    <div className="flex h-[29px] shrink-0 items-center gap-[3px]">
      <Strip>
        <Grip />
        <Tool icon="ortho" label="正交" />
        <Tool icon="snap" label="对象捕捉" active />
        <Tool icon="dynIn" label="动态输入" />
      </Strip>
      <Strip>
        <Grip />
        <Tool icon="cross" label="交点" />
        <Tool icon="perp" label="垂点" active />
        <Tool icon="mid" label="中点" active />
        <Tool icon="vertex" label="顶点" />
        <Tool icon="coord" label="坐标" />
      </Strip>
    </div>
  </main>
);

const NumberBox = ({ label, value, className }) => (
  <span className={`flex h-6 shrink-0 items-center border border-[#7a7a7a] bg-[#f0f0f0] pr-[3px] ${className}`}>
    <input aria-label={label} defaultValue={value} className="w-full min-w-0 pr-2 text-right text-[12px] text-[#808080] outline-none" />
    <svg viewBox="0 0 6 14" className="h-[14px] w-[6px] shrink-0" aria-hidden="true">
      <path d="M0 3h6L3 0zM0 11h6l-3 3z" fill="#606060" />
    </svg>
  </span>
);

const OffsetPanel = () => (
  <section className="absolute top-[61px] right-12 w-[403px] border border-[#b0b0b0] bg-[#f4f4f4] shadow-lg">
    <div className="h-[7px] bg-white" />
    <div className="flex h-[21px] items-center justify-between bg-[#a0a0a0] pr-[6px] pl-[2px] text-white">
      <h2>偏移工具栏</h2>
      <button type="button" aria-label="关闭">
        <svg viewBox="0 0 10 10" className="size-[10px]"><path d="M1 1l8 8M9 1L1 9" stroke="#fff" strokeWidth="1.500" /></svg>
      </button>
    </div>
    <div className="flex h-[26px] items-center text-[#808080]">
      <Combo label="偏移方式" value="不偏移" className="mr-0.5 w-[58px] text-black" />
      <Sep />
      <span className="w-[19px] shrink-0">X=</span>
      <NumberBox label="X" value="0" className="w-[57px]" />
      <span className="w-[28px] shrink-0 pl-[3px]">mm</span>
      <span className="w-[19px] shrink-0">Y=</span>
      <NumberBox label="Y" value="0" className="w-[57px]" />
      <span className="w-[26px] shrink-0 pl-[3px]">mm</span>
      <Sep />
      <label className="flex shrink-0 items-center gap-[9px] text-black">
        <input type="checkbox" className="size-[11px] appearance-none border border-[#b0b0b0] bg-white" />
        旋转
      </label>
      <NumberBox label="旋转角度" value="0.000" className="ml-1 w-[67px]" />
      <span className="ml-0.5">°</span>
    </div>
  </section>
);

const StatusBar = () => (
  <footer className="flex h-[22px] shrink-0 gap-[3px] border-t border-[#f8f8f8] pt-px">
    {[
      ['X=54906 Y=3728', 'w-[147px]'],
      ['层高:3.55m', 'w-[77px]'],
      ['底标高:-3.58m', 'w-[97px]'],
      ['0', 'w-[47px]'],
      ['按鼠标左键指定第一个端点，按右键中止或ESC取消', 'flex-1'],
      ['243.5 FPS', 'w-[70px]'],
    ].map(([text, width]) => (
      <div key={text} className={`flex items-center border border-[#d4d4d4] bg-linear-to-b from-[#fbfbfb] to-[#efefef] pl-px ${width}`}>
        <Song>{text}</Song>
      </div>
    ))}
  </footer>
);

const Sogou = ({ className }) => (
  <svg viewBox="0 0 28 28" className={className} aria-hidden="true">
    <path d="M3 5L23 1q3 0 3.500 3L27 22q0 3-3 3.500L7 27q-3 0-3.500-3L1 8q0-3 2-3z" fill="#f4511e" />
    <path d="M21 8c-4-2-12-1-12 2.500 0 4 12 2 12 6.500 0 4-8 4.500-13 2.500" fill="none" stroke="#fff" strokeWidth="3.800" />
  </svg>
);

const ImeBar = () => (
  <div className="absolute right-[95px] bottom-[44px] flex items-center">
    <Sogou className="z-10 -mr-3 size-7" />
    <div className="flex h-[24px] items-center gap-2 border border-[#a9c3dd] bg-[#fbfdff] pr-1 pl-[17px] text-[#1e72c8]">
      <span className="text-[15px] leading-5 font-bold">英</span>
      <svg viewBox="0 0 12 12" className="size-3"><circle cx="3" cy="3" r="2" fill="currentColor" /><path d="M8 6h3c0 3-1 4-3 5z" fill="currentColor" /></svg>
      <svg viewBox="0 0 12 16" className="h-4 w-3"><rect x="3.500" width="5" height="9" rx="2.500" fill="currentColor" /><path d="M1 6c0 7 10 7 10 0M6 11v4M3 15h6" fill="none" stroke="currentColor" strokeWidth="1.500" /></svg>
      <svg viewBox="0 0 16 12" className="h-3 w-4"><rect x=".8" y=".8" width="14.400" height="10.400" rx="1" fill="none" stroke="currentColor" strokeWidth="1.600" /><path d="M3 4h10M3 6.500h10" stroke="currentColor" strokeWidth="1.500" strokeDasharray="1.500 1" /><path d="M5 9h6" stroke="currentColor" /></svg>
      <div className="flex items-center gap-[5px]">
        <svg viewBox="0 0 16 16" className="size-4"><circle cx="6" cy="4" r="3.500" fill="#b5c3d5" /><path d="M0 14c0-8 12-8 12 0z" fill="#b5c3d5" /><rect x="7" y="8" width="9" height="7" rx="1" fill="#fff" stroke="#b5c3d5" /><path d="M9 10v3M11 10v3h3v-2h-2" fill="none" stroke="#9fb2c8" /></svg>
        <svg viewBox="0 0 16 14" className="h-[14px] w-4"><path d="M5 0c1 2 5 2 6 0l5 3-2 4-2-1v8H4V6L2 7 0 3z" fill="currentColor" /></svg>
        <svg viewBox="0 0 16 16" className="size-4"><path d="M2 14l7-7" stroke="currentColor" strokeWidth="3.500" strokeLinecap="round" /><path d="M8 8c-2-4 1-8 5-7l-3 3 2 2 3-3c1 4-3 7-7 5z" fill="currentColor" /></svg>
      </div>
    </div>
  </div>
);

const taskApps = [
  { name: '搜狗', art: <><g fill="#e8e8e8"><rect x="2" y="1" width="10" height="10" rx="4.500" /><rect x="12" y="2" width="10" height="10" rx="4.500" /><rect x="1" y="11" width="10" height="10" rx="4.500" /><rect x="11" y="12" width="10" height="10" rx="4.500" /><circle cx="11.500" cy="11.500" r="5" /></g><path d="M12 1c-2 5-1 8 4 9M22 12c-5-2-9-1-10 4M11 22c2-5 1-8-4-9M1 11c5 2 9 1 10-4" fill="none" stroke="#01090d" strokeWidth="1.200" /></> },
  { name: '毒霸', art: <path d="M20 2c-7-1-17 1-17 10 1 9 15 9 16 1h-5c-2-4 3-4 2-7-7-3-12 3-9 8 3 3 7 2 8-1" fill="none" stroke="#c9c9c9" strokeWidth="1.300" /> },
  { name: 'Edge', art: <path d="M1 10C3-2 21-2 21 10v3H8c0 6 7 6 12 3v5C12 24 3 21 3 14c0-4 3-6 6-7-1 1-1 2-1 3h7c0-6-10-6-14 0z" fill="#0f7bdc" /> },
  { name: '应用商店', art: <><path d="M0 5l21-2v19L0 19z" fill="#fff" /><path d="M5 5c0-6 5-7 6-2M8 4c0-5 7-6 7-1" fill="none" stroke="#fff" /><path d="M5 9l4-.5V12H5zM10 8.300l5-.6V12h-5zM5 13h4v3.500L5 16zM10 13h5v4.500l-5-.7z" fill="#01090d" /></> },
  { name: '文件资源管理器', art: <><path d="M1 3h8l1 2h12v15H1z" fill="#f8dd83" /><path d="M1 3h8v2H1z" fill="#eab63b" /><path d="M5 12h13v9h-4v-4H9v4H5z" fill="#37a7e6" /></> },
  { name: '浏览器', open: true, art: <path d="M23 1c-2 5-8 4-12 5-5 2-5 10 0 11 4 0 5-4 3-6l8-1c1 15-19 17-21 4C-1 1 10-1 23 1z" fill="#1e9bf0" /> },
  { name: '360浏览器', open: true, art: <><circle cx="11" cy="12" r="10" fill="#5fbf2c" /><path d="M5 12h12c0-9-12-9-12 0 0 6 8 7 11 3" fill="none" stroke="#fff" strokeWidth="2.400" /><path d="M1 15C3 6 12 0 21 1c-6 2-13 5-20 14z" fill="#8adf4a" /></> },
  { name: '广联达', open: true, active: true },
  { name: '记事', open: true, art: <><rect width="23" height="22" rx="2" fill="#f29a1c" /><path d="M3 4h14v15H3z" fill="#fff8e8" /><path d="M5 8h9M5 11h7M5 14h5" stroke="#b09060" /><path d="M9 16L20 2l2 2-10 13z" fill="#7a4a20" /></> },
];

const TaskButton = ({ app }) => (
  <button type="button" aria-label={app.name} className={`flex w-12 flex-col items-center ${app.active ? 'bg-[#33393c]' : ''}`}>
    <span className="flex flex-1 items-center">
      {app.active ? <Logo className="size-6" /> : <svg viewBox="0 0 23 23" className="size-[23px]">{app.art}</svg>}
    </span>
    <span className={`h-[2px] ${app.active ? 'w-full' : 'w-10'} ${app.open ? 'bg-[#76b9ed]' : ''}`} />
  </button>
);

const Taskbar = () => (
  <div className="flex h-10 shrink-0 bg-[#01090d] text-white">
    <button type="button" aria-label="开始" className="flex w-12 items-center justify-center bg-black">
      <svg viewBox="0 0 16 16" className="size-4"><path d="M0 2.300l6.500-.9v6.100H0zM7.300 1.200L16 0v7.500H7.300zM0 8.300h6.500v6.200L0 13.600zM7.300 8.300H16V16l-8.700-1.200z" fill="#fff" /></svg>
    </button>
    <label className="flex w-[344px] items-center bg-[#333333] pr-[14px] pl-[9px]">
      <svg viewBox="0 0 22 22" className="size-[22px] shrink-0"><circle cx="11" cy="11" r="9" fill="none" stroke="#fff" strokeWidth="3" /></svg>
      <input aria-label="搜索" placeholder="在这里输入你要搜索的内容" className="ml-[5px] min-w-0 flex-1 text-[14px] outline-none placeholder:text-[#9b9b9b]" />
      <svg viewBox="0 0 12 18" className="h-[18px] w-3"><rect x="3.500" y=".5" width="5" height="11" fill="none" stroke="#aaa" /><path d="M1 9v5h10V9M6 14v3M3 17h6" fill="none" stroke="#aaa" /></svg>
    </label>
    <div className="ml-[3px] flex">
      {taskApps.slice(0, 2).map((app) => <TaskButton key={app.name} app={app} />)}
    </div>
    <div className="ml-[6px] flex gap-px">
      {taskApps.slice(2).map((app) => <TaskButton key={app.name} app={app} />)}
    </div>
    <div className="ml-auto flex items-center">
      <div className="w-[76px] text-center leading-[18px]">31%<br />CPU使用</div>
      <span className="flex w-6 justify-center"><svg viewBox="0 0 12 8" className="h-2 w-3"><path d="M1 7l5-5 5 5" fill="none" stroke="#fff" strokeWidth="1.300" /></svg></span>
      <span className="flex w-6 justify-center"><svg viewBox="0 0 16 12" className="h-3 w-4"><path d="M5 3.500h9.500v7H3V7M15.500 5v4" fill="none" stroke="#fff" /><path d="M6 5h7v4H6z" fill="#fff" /><path d="M1 0v2M4 0v2M.5 2.500h4v2h-4zM2.500 5v3" fill="none" stroke="#fff" /></svg></span>
      <span className="flex w-6 justify-center"><svg viewBox="0 0 14 14" className="size-[14px]"><path d="M1 10C2 5 6 2 13 1M4 12c0-4 3-7 9-8M7 13c0-3 2-5 6-6" fill="none" stroke="#ccc" /><path d="M10 13c0-2 1-3 3-3v3z" fill="#fff" /></svg></span>
      <span className="flex w-6 justify-center"><svg viewBox="0 0 16 14" className="h-[14px] w-4"><path d="M1 5h3l3-3v10L4 9H1z" fill="none" stroke="#fff" /><path d="M9 5c1 1 1 3 0 4M11 3.500c2 2 2 5 0 7" fill="none" stroke="#fff" /><path d="M13 2c3 3 3 7 0 10" fill="none" stroke="#777" /></svg></span>
      <span className="w-6 text-center text-[13px]">中</span>
      <span className="flex w-8 justify-center"><Sogou className="size-4" /></span>
      <div className="w-[76px] text-center leading-[19px]">19:30<br />2017/7/21</div>
      <button type="button" aria-label="通知" className="flex w-[47px] justify-center">
        <svg viewBox="0 0 26 24" className="h-6 w-[26px]">
          <path d="M2 1h16v12H8l-4 4v-4H2z" fill="#fff" /><path d="M5 4.500h10M5 7h10M5 9.500h6" stroke="#000" />
          <circle cx="18" cy="16" r="7.500" fill="#333" stroke="#777" />
          <text x="18" y="20" textAnchor="middle" fill="#fff" fontSize="11" fontWeight="bold" fontFamily="Open Sans, sans-serif">2</text>
        </svg>
      </button>
      <span className="h-10 w-[5px] border-l border-[#555]" />
    </div>
  </div>
);

const App = () => {
  return (
    <div className="relative flex h-screen flex-col overflow-hidden bg-[#f0f0f0] font-['Open_Sans','Noto_Sans_CJK_SC',sans-serif] text-[12px] leading-4 text-black">
      <TitleBar />
      <MenuBar />
      <MainToolbar />
      <div className="flex min-h-0 flex-1 gap-1">
        <Sidebar />
        <Workspace />
      </div>
      <StatusBar />
      <Taskbar />
      <OffsetPanel />
      <ImeBar />
      <div className="absolute -top-7 right-[237px] flex size-[46px] items-end justify-center rounded-full border-2 border-[#c8c8c8] bg-[#3dbb5c] text-[12px] leading-[18px] font-bold text-white shadow-md">
        71
      </div>
    </div>
  );
};

export default App;
